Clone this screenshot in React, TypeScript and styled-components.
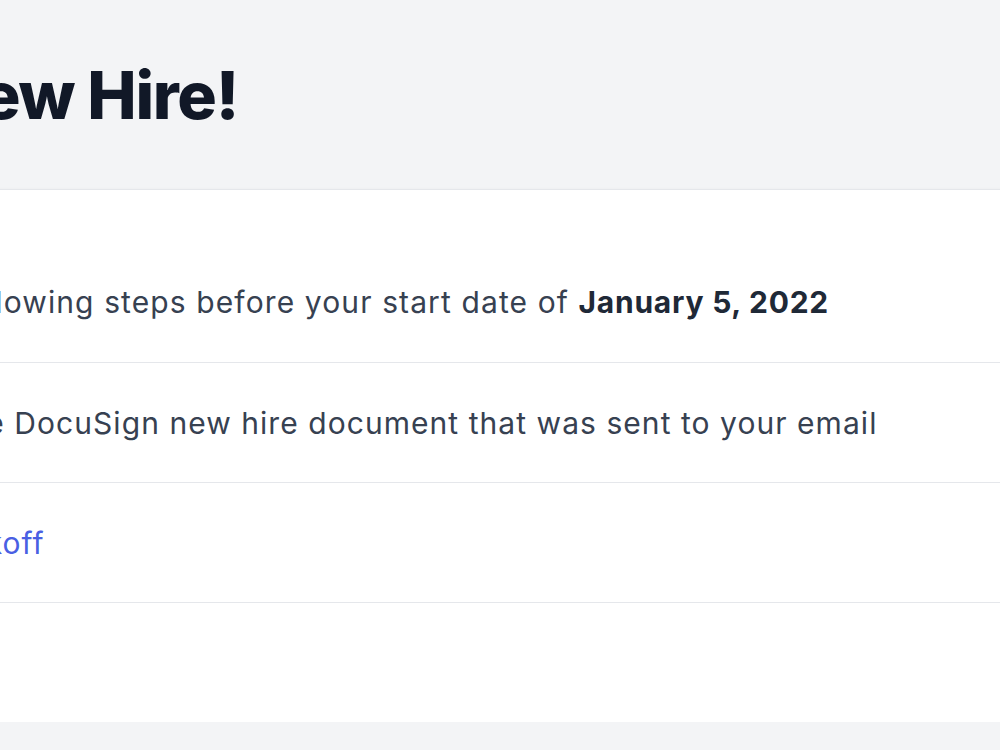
import React from "react";
import styled, { createGlobalStyle } from "styled-components";

const GlobalStyle = createGlobalStyle`
  html, body {
    margin: 0;
    padding: 0;
    background: #f3f4f6;
    overflow: hidden;
  }
  body {
    font-family: Inter, "Noto Sans", "Liberation Sans", sans-serif;
  }
`;

interface IStep {
  id: string;
  text: string;
  link?: string;
}

const steps: IStep[] = [
  { id: "docusign", text: "Review and sign the DocuSign new hire document that was sent to your email" },
  { id: "kickoff", text: "Set a time for a ", link: "kickoff" },
  { id: "payroll", text: "Set up payroll" },
];

// the page is shown zoomed in, so its left part runs off the screen
const Page = styled.div`
  width: 1600px;
  margin-left: -428px;
`;

const Header = styled.header`
  padding: 55px 60px 54px 50px;
`;

const Title = styled.h1`
  margin: 0;
  font-size: 66px;
  line-height: 80px;
  font-weight: 800;
  letter-spacing: -0.02em;
  color: #111827;
`;

const Card = styled.section`
  background: #ffffff;
  border-top: 1px solid #e5e7eb;
  box-shadow: 0 2px 4px rgba(17, 24, 39, 0.12);
`;

const Intro = styled.p`
  margin: 0;
  padding: 92px 60px 40px 66px;
  font-size: 30px;
  line-height: 40px;
  letter-spacing: 0.037em;
  color: #374151;

  strong {
    font-weight: 700;
    letter-spacing: 0.025em;
    color: #1f2937;
  }
`;

const StepRow = styled.div`
  display: flex;
  align-items: center;
  gap: 23px;
  min-height: 120px;
  padding: 0 60px 0 74px;
  border-top: 1px solid #e5e7eb;
  box-sizing: border-box;
  font-size: 30px;
  line-height: 40px;
  letter-spacing: 0.035em;
  color: #374151;
`;

const Check = styled.span`
  width: 32px;
  height: 32px;
  flex: none;
  border: 2px solid #d1d5db;
  border-radius: 50%;
  box-sizing: border-box;
`;

const Link = styled.a`
  color: #4a5fe3;
  text-decoration: none;
`;

const App = () => {
  return (
    <>
      <GlobalStyle />
      <Page>
        <Header>
          <Title>Welcome New Hire!</Title>
        </Header>
        <Card>
          <Intro>
            Please complete the following steps before your start date of{" "}
            <strong>January 5, 2022</strong>
          </Intro>
          {steps.map((step) => (
            <StepRow key={step.id}>
              <Check />
              <span>
                {step.text}
                {step.link && <Link href="#">{step.link}</Link>}
              </span>
            </StepRow>
          ))}
        </Card>
      </Page>
    </>
  );
};

export default App;
